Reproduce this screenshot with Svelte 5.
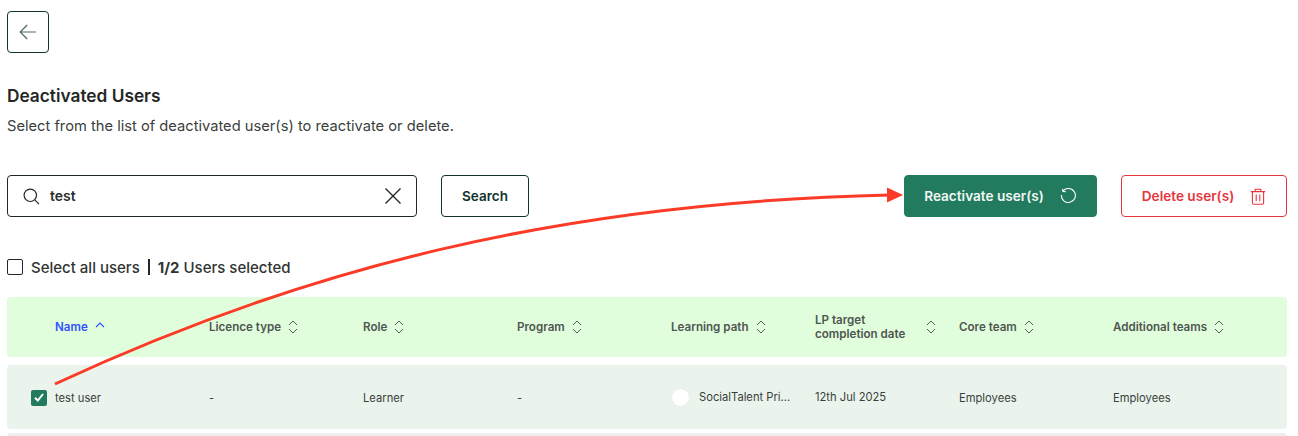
<script>
  const cols = [
    { label: 'Name', active: true },
    { label: 'Licence type' },
    { label: 'Role' },
    { label: 'Program' },
    { label: 'Learning path' },
    { label: 'LP target completion date', wide: true },
    { label: 'Core team' },
    { label: 'Additional teams' }
  ];
</script>

<main class="page">
  <button class="back" aria-label="Back">
    <svg width="18" height="16" viewBox="0 0 18 16" fill="none" stroke="#4f6a62" stroke-width="1.2">
      <path d="M17 8H1.2M8.2 1 1.2 8l7 7" />
    </svg>
  </button>

  <h1>Deactivated Users</h1>
  <p class="sub">Select from the list of deactivated user(s) to reactivate or delete.</p>

  <div class="toolbar">
    <div class="search">
      <svg width="17" height="17" viewBox="0 0 17 17" fill="none" stroke="#1f2a28" stroke-width="1.2">
        <circle cx="7.3" cy="7.3" r="6.2" />
        <path d="m11.8 11.8 4.2 4.4" />
      </svg>
      <span class="term">test</span>
      <svg class="clear" width="18" height="18" viewBox="0 0 18 18" fill="none" stroke="#1f2a28" stroke-width="1.4">
        <path d="M1.5 1.5l15 15M16.5 1.5l-15 15" />
      </svg>
    </div>
    <button class="btn-search">Search</button>
    <button class="btn-react">
      Reactivate user(s)
      <svg width="17" height="17" viewBox="0 0 17 17" fill="none" stroke="#fff" stroke-width="1.1">
        <path d="M3.2 2.8A7 7 0 1 1 1.4 7" />
        <path d="M2.6 0.8 3 3.4l2.7.2" />
      </svg>
    </button>
    <button class="btn-del">
      Delete user(s)
      <svg width="16" height="17" viewBox="0 0 16 17" fill="none" stroke="#e5363d" stroke-width="1.1">
        <path d="M.8 3.6h14.4M5.2 3.4V1.2h5.6v2.2M2.4 3.6v11.2c0 .9.6 1.4 1.4 1.4h8.4c.8 0 1.4-.5 1.4-1.4V3.6M6.2 6.6v6.6M9.8 6.6v6.6" />
      </svg>
    </button>
  </div>

  <div class="select-row">
    <span class="box"></span>
    <span class="all">Select all users</span>
    <span class="divider"></span>
    <span class="count"><b>1/2</b> Users selected</span>
  </div>

  <div class="table-head grid">
    {#each cols as c}
      <div class="th" class:active={c.active} class:wide={c.wide}>
        <span class="th-label">{c.label}</span>
        {#if c.active}
          <svg width="10" height="6" viewBox="0 0 10 6" fill="none" stroke="#2f50ff" stroke-width="1.1"><path d="M1 5l4-4 4 4" /></svg>
        {:else}
          <svg width="10" height="14" viewBox="0 0 10 14" fill="none" stroke="#55605c" stroke-width="1"><path d="M1 5l4-4 4 4M1 9l4 4 4-4" /></svg>
        {/if}
      </div>
    {/each}
  </div>

  <div class="table-row grid">
    <div class="td name">
      <span class="check">
        <svg width="10" height="9" viewBox="0 0 10 9" fill="none" stroke="#fff" stroke-width="2"><path d="M1 4.8l2.8 2.700L9 1" /></svg>
      </span>
      test user
    </div>
    <div class="td">-</div>
    <div class="td">Learner</div>
    <div class="td">-</div>
    <div class="td lp"><span class="dot"></span>SocialTalent Pri...</div>
    <div class="td date">12th Jul 2025</div>
    <div class="td">Employees</div>
    <div class="td">Employees</div>
  </div>
  <div class="next-row"></div>

  <svg class="arrow" width="1298" height="436" viewBox="0 0 1298 436" fill="none">
    <path d="M55 384C300 270 560 202 890 195" stroke="#fb3a27" stroke-width="3" />
    <path d="M903 195 887 187.500V202.500Z" fill="#fb3a27" />
  </svg>
</main>

<style>
  :global(body) {
    margin: 0;
    background: #fff;
  }
  .page {
    position: relative;
    height: 436px;
    overflow: hidden;
    padding: 11px 11px 0 7px;
    box-sizing: border-box;
    font-family: Inter, "Liberation Sans", sans-serif;
    color: #2a2f2d;
  }
  button {
    font-family: inherit;
    box-sizing: border-box;
    background: #fff;
    cursor: pointer;
  }
  .back {
    display: flex;
    align-items: center;
    justify-content: center;
    width: 42px;
    height: 42px;
    padding: 0;
    border: 1px solid #12332b;
    border-radius: 4px;
  }
  h1 {
    margin: 33px 0 0;
    font-size: 17.3px;
    line-height: 20px;
    font-weight: 600;
    color: #232725;
  }
  .sub {
    margin: 10px 0 0;
    font-size: 14.7px;
    line-height: 20px;
    color: #3a3f3d;
  }
  .toolbar {
    display: flex;
    margin-top: 39px;
    height: 42px;
  }
  .search {
    display: flex;
    align-items: center;
    box-sizing: border-box;
    width: 410px;
    padding: 0 14px 0 15px;
    border: 1px solid #1f2a28;
    border-radius: 4px;
  }
  .term {
    margin-left: 10px;
    font-size: 14px;
    line-height: 16px;
    margin-bottom: 1px;
    font-weight: 600;
    color: #2a2f2d;
  }
  .clear {
    margin-left: auto;
  }
  .btn-search {
    width: 88px;
    margin-left: 24px;
    border: 1px solid #12332b;
    border-radius: 4px;
    font-size: 13.5px;
    font-weight: 600;
    color: #12332b;
  }
  .btn-react,
  .btn-del {
    display: flex;
    align-items: center;
    justify-content: center;
    border-radius: 4px;
    font-size: 13.6px;
    font-weight: 600;
  }
  .btn-react {
    gap: 16px;
    width: 193px;
    margin-left: 375px;
    background: #227b5e;
    border: 1px solid #227b5e;
    color: #f1f7f4;
  }
  .btn-del {
    gap: 16px;
    width: 166px;
    margin-left: 24px;
    border: 1px solid #e5363d;
    color: #e5363d;
  }
  .select-row {
    display: flex;
    align-items: center;
    margin-top: 40px;
    height: 20px;
    font-size: 15px;
    color: #2f3432;
  }
  .box {
    box-sizing: border-box;
    width: 16px;
    height: 16px;
    border: 1.3px solid #1f2a28;
    border-radius: 2px;
  }
  .all {
    margin-left: 8px;
    font-weight: 500;
  }
  .divider {
    width: 2px;
    height: 16px;
    margin: 0 8px 0 8px;
    background: #232725;
  }
  .count {
    font-weight: 500;
  }
  .count b {
    font-weight: 700;
  }
  .grid {
    display: grid;
    grid-template-columns: 202px 154px 154px 154px 144px 144px 154px 1fr;
    align-items: center;
    width: 1280px;
    border-radius: 4px;
  }
  .table-head {
    height: 60px;
    margin-top: 20px;
    background: #e0fedb;
  }
  .th {
    display: flex;
    align-items: center;
    gap: 7px;
    font-size: 11.6px;
    line-height: 14px;
    font-weight: 600;
    color: #4f5552;
  }
  .th:first-child {
    padding-left: 48px;
  }
  .th.active {
    color: #2f50ff;
  }
  .th.active svg {
    margin: 0 0 4px 0;
  }
  .th.wide .th-label {
    width: 104px;
  }
  .table-row {
    height: 64px;
    margin-top: 8px;
    background: #eaf4ec;
  }
  .td {
    display: flex;
    align-items: center;
    font-size: 11.2px;
    color: #3a3f3d;
    padding-top: 1px;
  }
  .td.date {
    padding-top: 0;
  }
  .td.lp {
    padding-top: 0;
    gap: 9px;
  }
  .name {
    padding-left: 24px;
  }
  .check {
    display: flex;
    align-items: center;
    justify-content: center;
    width: 16px;
    height: 16px;
    margin-right: 8px;
    border-radius: 2px;
    background: #227b5e;
  }
  .dot {
    box-sizing: border-box;
    width: 19px;
    height: 19px;
    border-radius: 50%;
    background: #fff;
    border: 1px solid #e6f0ea;
  }
  .next-row {
    width: 1280px;
    height: 20px;
    margin-top: 4px;
    border-radius: 4px;
    background: #eeeeee;
  }
  .arrow {
    position: absolute;
    top: 0;
    left: 0;
    pointer-events: none;
  }
</style>
